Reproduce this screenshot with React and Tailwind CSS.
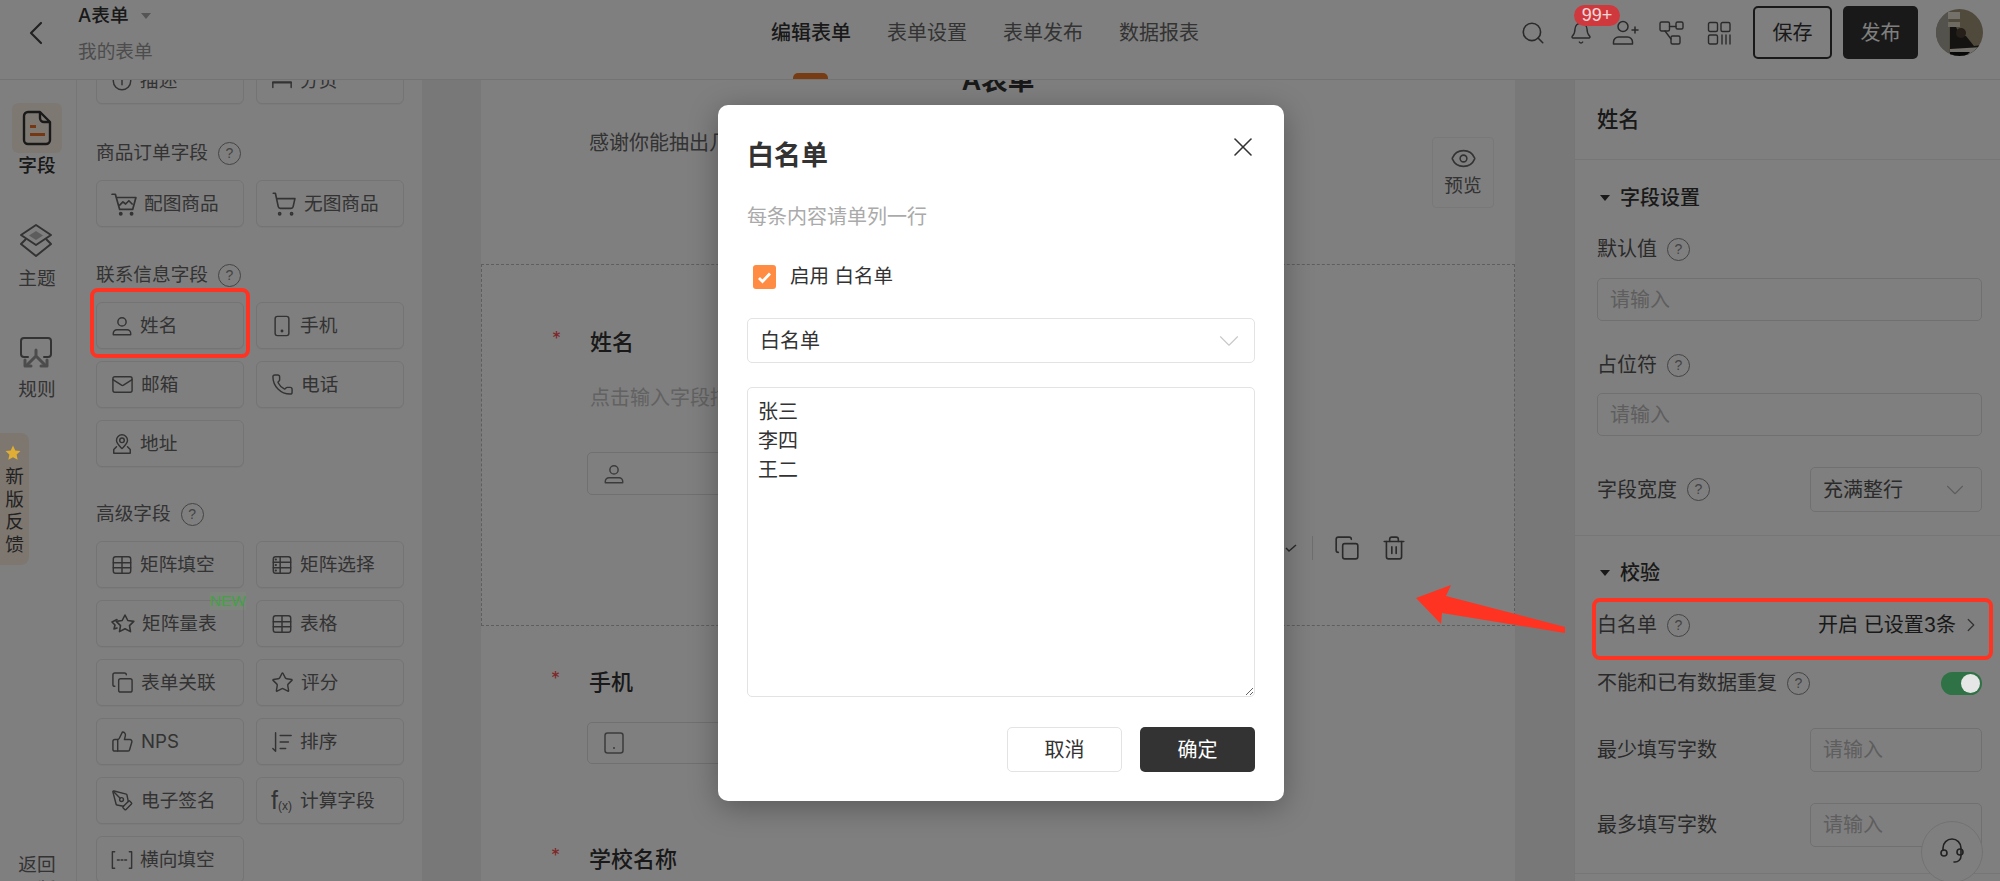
import React from "react";
import { ChevronDown, ChevronRight, ChevronLeft, X, Mail, Phone, Star, ThumbsUp, PenTool, Eye, Copy, Trash2, Search, Bell, ShoppingCart } from "lucide-react";

const Svg = ({ children, size = 22, w, h, box = "0 0 24 24", sw = 1.6 }) => (
  <svg width={w || size} height={h || size} viewBox={box} fill="none" stroke="currentColor" strokeWidth={sw} strokeLinecap="round" strokeLinejoin="round" className="shrink-0">
    {children}
  </svg>
);

const PersonIcon = (p) => (
  <Svg {...p}>
    <circle cx="12" cy="7.5" r="4.5" />
    <path d="M2.5 21.5v-1.5a4 4 0 0 1 4-4h11a4 4 0 0 1 4 4v1.5z" />
  </Svg>
);
const MobileIcon = (p) => (
  <Svg {...p}>
    <rect x="4.5" y="1.5" width="15" height="21" rx="2.5" />
    <circle cx="12" cy="17.5" r="0.8" fill="currentColor" />
  </Svg>
);
const InfoIcon = () => (
  <Svg>
    <circle cx="12" cy="12" r="9.5" />
    <path d="M12 8v8" />
  </Svg>
);
const PagingIcon = () => (
  <Svg>
    <path d="M1 7h22" strokeDasharray="4 3" />
    <path d="M2 19v-6h20v6" />
    <path d="M2 14h20" />
  </Svg>
);
const PicCartIcon = () => (
  <Svg size={26}>
    <path d="M1 3h3l4 14h12l3-11H5" />
    <path d="M8 13l3-3 2.500 2 3-3 3 3" />
    <circle cx="9" cy="21" r="1" fill="currentColor" />
    <circle cx="19" cy="21" r="1" fill="currentColor" />
  </Svg>
);
const PinIcon = () => (
  <Svg>
    <circle cx="12" cy="8" r="2.500" />
    <path d="M12 17c-3-3-6-5.500-6-9a6 6 0 0 1 12 0c0 3.500-3 6-6 9z" />
    <path d="M6 15l-3 3v4h18v-4l-3-3" />
  </Svg>
);
const GridIcon = ({ dots }) => (
  <Svg>
    <rect x="2.500" y="3" width="19" height="18" rx="2.500" />
    <path d="M2.500 9h19M2.500 15h19M10 3v18" />
    {dots && <path d="M5 6h.5M5 12h.5M5 18h.5" strokeWidth="2" />}
  </Svg>
);
const TableIcon = () => (
  <Svg>
    <rect x="2.500" y="3" width="19" height="18" rx="2.500" />
    <path d="M2.500 9.500h19M2.500 15h19M12 3v18" />
  </Svg>
);
const ScaleIcon = () => (
  <Svg size={24}>
    <path d="M14 3l2.800 5.500 6 .9-4.300 4.200 1 6-5.500-2.900-5.500 2.900 1-6-4.300-4.200 6-.9z" />
    <path d="M6 7.500L1 10l3 3-1 4 3-1" />
  </Svg>
);
const SortIcon = () => (
  <Svg>
    <path d="M5 2v20l-3-3" />
    <path d="M10 5h12M10 12h9M10 19h6" />
  </Svg>
);
const FxIcon = () => (
  <span className="w-[22px] shrink-0 flex items-end font-['Liberation_Sans',sans-serif] leading-none text-[#666]">
    <span className="text-[25px]">f</span>
    <span className="text-[12px] mb-[1px]">(x)</span>
  </span>
);
const BlankIcon = () => (
  <Svg>
    <path d="M4 3H1.500v18H4M20 3h2.500v18H20" />
    <path d="M7 12h2M11 12h2M15 12h2" />
  </Svg>
);

const Field = ({ icon, text, children }) => (
  <div className="relative h-[47px] rounded-[6px] border border-[#e8e8e8] bg-white flex items-center gap-[7px] pl-[14px] text-[18.67px] text-[#666] shadow-[0_1px_1px_rgba(0,0,0,0.04)]">
    {icon}
    <span>{text}</span>
    {children}
  </div>
);

const Help = ({ className = "" }) => (
  <span className={`inline-flex w-[23px] h-[23px] shrink-0 items-center justify-center rounded-full border border-[#888] text-[14px] text-[#888] font-['Liberation_Sans',sans-serif] ${className}`}>?</span>
);

const GroupLabel = ({ text, h }) => (
  <div className={`${h} flex items-end pb-[14px] text-[18.67px] text-[#666]`}>
    <span className="leading-[26px]">{text}</span>
    <Help className="ml-[10px] mb-[1px]" />
  </div>
);

const TextInput = ({ className = "" }) => (
  <input
    placeholder="请输入"
    className={`border border-[#e0e0e0] rounded-[5px] px-[12px] text-[20px] bg-white placeholder:text-[#bdbdbd] outline-none ${className}`}
  />
);

const Triangle = () => (
  <span className="w-0 h-0 border-x-[5px] border-x-transparent border-t-[6px] border-t-[#333]" />
);

const SectionHead = ({ text, className }) => (
  <div className={`h-[28px] flex items-center gap-[10px] pl-[3px] font-medium text-[20px] text-[#333] ${className}`}>
    <Triangle />
    <span>{text}</span>
  </div>
);

const Row = ({ text, className = "", noHelp, children }) => (
  <div className={`flex items-center justify-between text-[20px] text-[#555] ${className}`}>
    <div className="flex items-center gap-[10px]">
      <span>{text}</span>
      {!noHelp && <Help />}
    </div>
    {children}
  </div>
);

function Header() {
  return (
    <header className="relative h-[80px] shrink-0 bg-white border-b border-[#e6e6e6] flex items-center">
      <div className="w-[78px] pl-[16px] -mt-[14px] text-[#444]">
        <ChevronLeft size={40} strokeWidth={1.3} />
      </div>
      <div className="w-[693px] -mt-[14px]">
        <div className="flex items-center gap-[12px] h-[30px] text-[18.67px] font-medium text-[#333]">
          <span>A表单</span>
          <span className="w-0 h-0 border-x-[5px] border-x-transparent border-t-[6px] border-t-[#aaa]" />
        </div>
        <div className="mt-[8px] text-[18.67px] leading-[26px] text-[#999]">我的表单</div>
      </div>
      <nav className="flex items-center gap-[36px] text-[20px] text-[#666] -mt-[14px]">
        <span className="font-medium text-[#333]">编辑表单</span>
        <span>表单设置</span>
        <span>表单发布</span>
        <span>数据报表</span>
      </nav>
      <div className="absolute left-[793px] bottom-0 w-[35px] h-[6px] rounded-t-[5px] bg-[#f0792a]" />
      <div className="ml-auto -mt-[14px] flex items-center pr-[17px] text-[#555]">
        <Search size={26} strokeWidth={1.5} />
        <div className="relative ml-[23px] w-[23px]">
          <Bell size={24} strokeWidth={1.4} />
          <span className="absolute z-[45] -top-[16px] left-[5px] h-[21px] w-[46px] rounded-full bg-[#cf393e] text-white/80 text-[18px] leading-[21px] text-center font-['Liberation_Sans',sans-serif]">99+</span>
        </div>
        <div className="ml-[20px]">
          <Svg size={27} box="0 0 27 27" sw={1.5}>
            <circle cx="11" cy="7.500" r="5" />
            <path d="M1.500 25v-2a5 5 0 0 1 5-5h9a5 5 0 0 1 5 5v2z" />
            <path d="M23 8v6M20 11h6" />
          </Svg>
        </div>
        <div className="ml-[20px]">
          <Svg size={25} box="0 0 25 25" sw={1.4}>
            <rect x="1" y="2" width="9.500" height="9" rx="1.500" />
            <rect x="17" y="2" width="7" height="7" rx="1.500" />
            <rect x="12" y="16" width="9" height="8" rx="1.500" />
            <path d="M10.500 6.500H17M6 11l6 8" />
          </Svg>
        </div>
        <div className="ml-[23px]">
          <Svg size={24} sw={1.4}>
            <rect x="1.500" y="1.500" width="9" height="9" rx="1.500" />
            <rect x="14" y="1.500" width="9" height="9" rx="1.500" />
            <rect x="1.500" y="14" width="9" height="9" rx="1.500" />
            <path d="M15 14v9M19 14v9M23 14v9" />
          </Svg>
        </div>
        <button className="ml-[22px] w-[79px] h-[53px] rounded-[5px] border-2 border-[#333] text-[20px] text-[#333]">保存</button>
        <button className="ml-[11px] w-[75px] h-[53px] rounded-[5px] bg-[#333] text-[20px] text-white">发布</button>
        <div className="ml-[18px] w-[47px] h-[47px] rounded-full overflow-hidden">
          <svg width="47" height="47" viewBox="0 0 47 47">
            <rect width="47" height="47" fill="#a09478" />
            <rect width="13" height="47" fill="#a8a498" />
            <rect x="12" y="3" width="12" height="7" fill="#e8e3d4" />
            <rect x="12" y="13" width="12" height="5" fill="#ddd7c6" />
            <path d="M14 18h6l4 8 6 1 8 10 9-1v11H14z" fill="#2a2622" />
            <circle cx="25" cy="24" r="5" fill="#4a3d32" />
            <path d="M14 40l33-2v9H14z" fill="#e8e3d8" />
            <path d="M14 43h20l-4 4H14z" fill="#111" />
          </svg>
        </div>
      </div>
    </header>
  );
}

function Rail() {
  return (
    <aside className="relative w-[77px] shrink-0 pr-[2px] border-r border-[#ececec] flex flex-col items-center overflow-hidden text-[18.67px] text-[#666]">
      <div className="shrink-0 mt-[23px] w-[50px] h-[50px] rounded-[6px] bg-[#fdf1e7] flex items-center justify-center">
        <svg width="30" height="36" viewBox="0 0 30 36" fill="none" stroke="#333" strokeWidth="2.400" strokeLinejoin="round">
          <path d="M6 2h12l10 10v18a4 4 0 0 1-4 4H6a4 4 0 0 1-4-4V6a4 4 0 0 1 4-4z" />
          <path d="M18 2v6a4 4 0 0 0 4 4h6" />
          <rect x="8" y="15" width="6" height="3" fill="#e8702a" stroke="none" />
          <rect x="8" y="23" width="15" height="3" fill="#e8702a" stroke="none" />
        </svg>
      </div>
      <div className="shrink-0 h-[26px] leading-[26px] font-medium text-[#333]">字段</div>
      <div className="shrink-0 mt-[44px] -ml-[2px] text-[#666]">
        <svg width="34" height="35" viewBox="0 0 34 35" fill="none" stroke="currentColor" strokeWidth="2" strokeLinejoin="round">
          <path d="M17 2l15 10-15 10L2 12z" />
          <path d="M17 8l7 4.500-7 4.500-7-4.500z" fill="#bbb" stroke="none" />
          <path d="M7 16l-5 5 15 12 15-12-5-5" />
        </svg>
      </div>
      <div className="shrink-0 mt-[8px] h-[26px] leading-[26px]">主题</div>
      <div className="shrink-0 mt-[44px] -ml-[2px] text-[#666]">
        <svg width="34" height="33" viewBox="0 0 34 33" fill="none" stroke="currentColor" strokeWidth="2" strokeLinecap="round" strokeLinejoin="round">
          <path d="M9 21H5a3 3 0 0 1-3-3V5a3 3 0 0 1 3-3h24a3 3 0 0 1 3 3v13a3 3 0 0 1-3 3h-4" />
          <path d="M17 14v6l-9 9M17 20l9 9" stroke="#999" strokeWidth="3" />
          <path d="M6 24v6h6M28 24v6h-6" stroke="#999" strokeWidth="3" />
        </svg>
      </div>
      <div className="shrink-0 mt-[8px] h-[26px] leading-[26px]">规则</div>
      <div className="relative shrink-0 mt-[30px] self-start w-[29px] h-[132px] rounded-r-[8px] bg-[#fbeee0] flex flex-col items-center text-[#444] leading-[22.5px]">
        <svg className="relative z-[45] mt-[11px] -ml-[3px]" width="18" height="18" viewBox="0 0 24 24" fill="#e0ad35">
          <path d="M12 2l3 6.500 7 .8-5.200 4.800 1.400 7L12 17.500 5.800 21l1.400-7L2 9.300l7-.8z" />
        </svg>
        <span className="mt-[4px]">新</span>
        <span>版</span>
        <span>反</span>
        <span>馈</span>
      </div>
      <div className="shrink-0 mt-[287px] w-[38px] leading-[25px] text-center">返回旧版</div>
    </aside>
  );
}

function FieldPanel() {
  return (
    <aside className="w-[345px] shrink-0 overflow-hidden pl-[19px] pr-[18px] bg-white">
      <div className="-mt-[23px] grid grid-cols-2 gap-[12px]">
        <Field icon={<InfoIcon />} text="描述" />
        <Field icon={<PagingIcon />} text="分页" />
      </div>
      <GroupLabel text="商品订单字段" h="h-[76px]" />
      <div className="grid grid-cols-2 gap-[12px]">
        <Field icon={<PicCartIcon />} text="配图商品" />
        <Field icon={<ShoppingCart size={26} strokeWidth={1.5} />} text="无图商品" />
      </div>
      <GroupLabel text="联系信息字段" h="h-[75px]" />
      <div className="grid grid-cols-2 gap-[12px]">
        <Field icon={<PersonIcon />} text="姓名" />
        <Field icon={<MobileIcon />} text="手机" />
        <Field icon={<Mail size={23} strokeWidth={1.5} />} text="邮箱" />
        <Field icon={<Phone size={23} strokeWidth={1.5} />} text="电话" />
        <Field icon={<PinIcon />} text="地址" />
      </div>
      <GroupLabel text="高级字段" h="h-[74px]" />
      <div className="grid grid-cols-2 gap-[12px]">
        <Field icon={<TableIcon />} text="矩阵填空" />
        <Field icon={<GridIcon dots />} text="矩阵选择" />
        <Field icon={<ScaleIcon />} text="矩阵量表">
          <span className="absolute z-[45] right-[-3px] -top-[9px] text-[15.5px] leading-[18px] font-medium text-[#46a046] bg-[#6fa56f]/15 font-['Liberation_Sans',sans-serif]">NEW</span>
        </Field>
        <Field icon={<TableIcon />} text="表格" />
        <Field icon={<Copy size={23} strokeWidth={1.5} />} text="表单关联" />
        <Field icon={<Star size={23} strokeWidth={1.5} />} text="评分" />
        <Field icon={<ThumbsUp size={23} strokeWidth={1.5} />} text="NPS" />
        <Field icon={<SortIcon />} text="排序" />
        <Field icon={<PenTool size={23} strokeWidth={1.5} />} text="电子签名" />
        <Field icon={<FxIcon />} text="计算字段" />
        <Field icon={<BlankIcon />} text="横向填空" />
      </div>
    </aside>
  );
}

const FieldTitle = ({ text, className }) => (
  <div className={`flex h-[30px] ml-[70px] items-center ${className}`}>
    <span className="w-[38px] text-[#ff4d4f] text-[18px] -mt-[8px]">*</span>
    <span className="text-[22px] font-medium text-[#333]">{text}</span>
  </div>
);

function FormCanvas() {
  return (
    <main className="flex-1 min-w-0 overflow-hidden bg-[#f0f0f0] px-[59px]">
      <div className="relative h-full overflow-hidden bg-white">
        <div className="-mt-[20px] h-[40px] leading-[40px] text-center text-[26.67px] font-semibold text-[#333]">A表单</div>
        <div className="mt-[29px] h-[28px] pl-[108px] text-[20px] leading-[28px] text-[#666] whitespace-nowrap">感谢你能抽出几分钟时间来填写此表单</div>
        <div className="absolute left-[951px] top-[57px] w-[62px] h-[71px] rounded-[4px] border border-[#f0f0f0] flex flex-col items-center text-[18.67px] text-[#666]">
          <Eye size={27} strokeWidth={1.4} className="mt-[7px]" />
          <span className="mt-[1px] leading-[26px]">预览</span>
        </div>

        <div className="mt-[107px] h-[362px] border border-dashed border-[#bdbdbd]">
          <FieldTitle text="姓名" className="mt-[62px]" />
          <div className="mt-[27px] h-[28px] pl-[108px] text-[20px] leading-[28px] text-[#c4c4c4]">点击输入字段描述</div>
          <div className="mt-[40px] ml-[105px] w-[640px] h-[43px] rounded-[5px] border border-[#e0e0e0] flex items-center pl-[15px] text-[#777]">
            <PersonIcon />
          </div>
          <div className="mt-[39px] h-[28px] flex items-center justify-end pr-[107px] text-[#555]">
            <svg width="14" height="14" viewBox="0 0 14 14" fill="none" stroke="currentColor" strokeWidth="1.500"><path d="M2 7l3 3 7-6" /></svg>
            <span className="ml-[14px] mr-[21px] w-px h-[24px] bg-[#ddd]" />
            <Copy size={26} strokeWidth={1.5} />
            <Trash2 size={26} strokeWidth={1.5} className="ml-[21px]" />
          </div>
        </div>

        <FieldTitle text="手机" className="mt-[41px]" />
        <div className="mt-[25px] ml-[106px] w-[640px] h-[42px] rounded-[5px] border border-[#e0e0e0] flex items-center pl-[16px] text-[#777]">
          <svg width="20" height="22" viewBox="0 0 20 22" fill="none" stroke="currentColor" strokeWidth="1.500"><rect x="1" y="1" width="18" height="20" rx="2.500" /><path d="M9 16h2" /></svg>
        </div>
        <FieldTitle text="学校名称" className="mt-[80px]" />
      </div>
    </main>
  );
}

function SettingsPanel() {
  return (
    <aside className="w-[426px] shrink-0 overflow-hidden bg-white border-l border-[#ececec] text-[20px]">
      <div className="h-[80px] px-[22px] flex items-center border-b border-[#ececec] text-[21.33px] font-medium text-[#333]">姓名</div>
      <div className="pl-[22px] pr-[18px] pb-[23px] border-b border-[#ececec]">
        <SectionHead text="字段设置" className="mt-[24px]" />
        <Row text="默认值" className="mt-[23px] h-[28px] !justify-start" />
        <TextInput className="mt-[15px] w-full h-[43px]" />
        <Row text="占位符" className="mt-[30px] h-[28px] !justify-start" />
        <TextInput className="mt-[14px] w-full h-[43px]" />
        <Row text="字段宽度" className="mt-[31px]">
          <div className="w-[172px] h-[45px] border border-[#e0e0e0] rounded-[5px] flex items-center justify-between pl-[12px] pr-[11px] text-[20px] text-[#555]">
            <span>充满整行</span>
            <ChevronDown size={30} strokeWidth={0.9} className="text-[#bbb]" />
          </div>
        </Row>
      </div>
      <div className="pl-[22px] pr-[18px] pb-[26px] border-b border-[#ececec]">
        <SectionHead text="校验" className="mt-[23px]" />
        <Row text="白名单" className="mt-[24px] h-[28px]">
          <span className="flex items-center gap-[4px] text-[#333] text-[20px] whitespace-nowrap">
            开启 已设置3条
            <ChevronRight size={22} strokeWidth={1.4} className="text-[#666]" />
          </span>
        </Row>
        <Row text="不能和已有数据重复" className="mt-[30px] h-[28px]">
          <span className="relative z-[45] w-[41px] h-[23px] rounded-full bg-[#2f7245] flex items-center justify-end pr-[2px]">
            <span className="w-[19px] h-[19px] rounded-full bg-[#e6e6e6]" />
          </span>
        </Row>
        <Row text="最少填写字数" noHelp className="mt-[31px]">
          <TextInput className="w-[172px] h-[44px]" />
        </Row>
        <Row text="最多填写字数" noHelp className="mt-[31px]">
          <TextInput className="w-[172px] h-[44px]" />
        </Row>
      </div>
    </aside>
  );
}

function WhitelistModal() {
  return (
    <div className="absolute z-50 left-[718px] top-[105px] w-[566px] h-[696px] rounded-[10px] bg-white px-[29px] pt-[33px] shadow-[0_6px_30px_rgba(0,0,0,0.3)]">
      <div className="flex justify-between h-[34px]">
        <span className="text-[27px] leading-[36px] font-semibold text-[#333]">白名单</span>
        <X size={32} strokeWidth={1.2} className="shrink-0 text-[#333] -mt-[7px] -mr-[4px]" />
      </div>
      <div className="mt-[31px] h-[28px] text-[20px] leading-[28px] text-[#aaa]">每条内容请单列一行</div>
      <div className="mt-[33px] ml-[6px] h-[26px] flex items-center gap-[14px] text-[19.5px] text-[#333]">
        <span className="w-[23px] h-[24px] rounded-[3px] bg-[#ff8c42] flex items-center justify-center">
          <svg width="15" height="13" viewBox="0 0 15 13" fill="none" stroke="#fff" strokeWidth="2.800"><path d="M2 7l3.500 3.500L13 2.500" /></svg>
        </span>
        <span>启用 白名单</span>
      </div>
      <div className="mt-[28px] h-[45px] rounded-[5px] border border-[#e3e3e3] flex items-center justify-between pl-[12px] pr-[8px] text-[20px] text-[#333]">
        <span>白名单</span>
        <ChevronDown size={34} strokeWidth={0.8} className="text-[#c8c8c8]" />
      </div>
      <textarea
        readOnly
        defaultValue={"张三\n李四\n王二"}
        className="mt-[24px] block w-full h-[310px] rounded-[5px] border border-[#e3e3e3] px-[10px] py-[10px] text-[20px] leading-[29px] text-[#333] outline-none"
      />
      <div className="mt-[30px] flex justify-end gap-[18px] text-[20px]">
        <button className="w-[115px] h-[45px] rounded-[5px] border border-[#e3e3e3] text-[#333]">取消</button>
        <button className="w-[115px] h-[45px] rounded-[5px] bg-[#333] text-white">确定</button>
      </div>
    </div>
  );
}

export default function App() {
  return (
    <div className="relative w-[2000px] h-[881px] overflow-hidden bg-white flex flex-col font-['Inter','Noto_Sans_CJK_SC',sans-serif]">
      <Header />
      <div className="flex flex-1 min-h-0">
        <Rail />
        <FieldPanel />
        <FormCanvas />
        <SettingsPanel />
      </div>

      <div className="absolute left-[1921px] top-[821px] w-[62px] h-[62px] rounded-full bg-white border border-[#e4e4e4] flex items-center justify-center text-[#444]">
        <svg width="24" height="28" viewBox="0 0 24 28" fill="none" stroke="currentColor" strokeWidth="1.600" strokeLinecap="round">
          <path d="M3 12V10a9 9 0 0 1 18 0v8a6 6 0 0 1-6 6h-1" />
          <circle cx="4" cy="15" r="3" />
          <circle cx="20" cy="14" r="3" />
        </svg>
      </div>

      {/* dim layer, the modal and the red notes sit on top of it */}
      <div className="absolute inset-0 z-40 bg-black/50" />
      <WhitelistModal />

      <div className="absolute z-[45] left-[90px] top-[288px] w-[160px] h-[70px] rounded-[8px] border-[4px] border-[#ff3322]" />
      <div className="absolute z-[45] left-[1592px] top-[598px] w-[401px] h-[62px] rounded-[8px] border-[4px] border-[#ff3322]" />
      <svg className="absolute z-[45] left-[1410px] top-[580px]" width="160" height="60" viewBox="0 0 160 60">
        <path d="M6 18L41 5l-5 11 119 31 0 6L32 33l-1 11z" fill="#ff3322" />
      </svg>
    </div>
  );
}
